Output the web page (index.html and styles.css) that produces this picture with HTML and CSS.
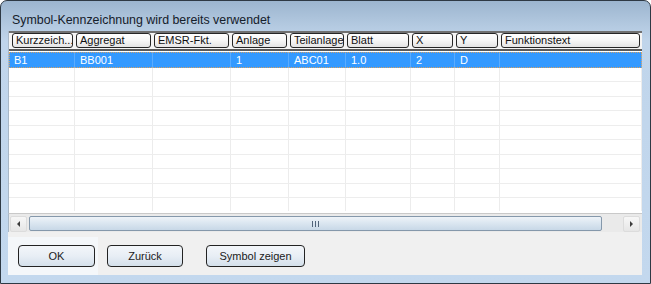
FILE: index.html
```html
<!DOCTYPE html>
<html lang="de">
<head>
  <meta charset="UTF-8">
  <title>Symbol-Kennzeichnung wird bereits verwendet</title>
  <link rel="stylesheet" href="styles.css">
</head>
<body>
  <div class="window">
    <div class="titlebar">Symbol-Kennzeichnung wird bereits verwendet</div>
    <div class="frame">
      <div class="grid">
        <div class="grid-head">
          <div class="hcell first"><span>Kurzzeich...</span></div>
          <div class="hcell"><span>Aggregat</span></div>
          <div class="hcell"><span>EMSR-Fkt.</span></div>
          <div class="hcell"><span>Anlage</span></div>
          <div class="hcell"><span>Teilanlage</span></div>
          <div class="hcell"><span>Blatt</span></div>
          <div class="hcell"><span>X</span></div>
          <div class="hcell"><span>Y</span></div>
          <div class="hcell"><span>Funktionstext</span></div>
        </div>
        <div class="grid-body" id="gridBody">
          <div class="row selected">
            <div class="cell">B1</div>
            <div class="cell">BB001</div>
            <div class="cell"></div>
            <div class="cell">1</div>
            <div class="cell">ABC01</div>
            <div class="cell">1.0</div>
            <div class="cell">2</div>
            <div class="cell">D</div>
            <div class="cell"></div>
          </div>
        </div>
      </div>
      <div class="hscroll">
        <div class="arrow left"><i></i></div>
        <div class="track">
          <div class="thumb"><span class="grip"></span></div>
        </div>
        <div class="arrow right"><i></i></div>
      </div>
      <div class="buttons">
        <button class="btn">OK</button>
        <button class="btn">Zurück</button>
        <button class="btn wide">Symbol zeigen</button>
      </div>
    </div>
  </div>

  <script>
    // leere Zeilen unter dem Treffer auffuellen
    const gridBody = document.getElementById("gridBody");
    for (let i = 0; i < 10; i++) {
      const row = document.createElement("div");
      row.className = "row";
      for (let c = 0; c < 9; c++) {
        const cell = document.createElement("div");
        cell.className = "cell";
        row.appendChild(cell);
      }
      gridBody.appendChild(row);
    }
  </script>
</body>
</html>
```

FILE: styles.css
```css
* {
  box-sizing: border-box;
}

body {
  margin: 0;
  font-family: "Liberation Sans", Arial, sans-serif;
  font-size: 11px;
  color: #000;
  background-color: #fff;
}

.window {
  width: 651px;
  height: 284px;
  border: 1px solid #2e3944;
  border-radius: 7px 7px 0 0;
  background: linear-gradient(to bottom, #9cb5cf 0, #b3c9e0 24px, #c0d5eb 40px, #c3d8ee 100%);
  display: flex;
  flex-direction: column;
}

.titlebar {
  height: 30px;
  padding: 0 0 4px 11px;
  display: flex;
  align-items: flex-end;
  font-size: 12.4px;
  color: #15202b;
}

.frame {
  padding: 0 8px 8px 7px;
  display: flex;
  flex-direction: column;
}

.grid {
  height: 182px;
  background-color: #fff;
  border-left: 1px solid #a9b8c7;
  display: flex;
  flex-direction: column;
}

.grid-head,
.row {
  display: grid;
  grid-template-columns: 66px 78px 78px 58px 57px 65px 44px 45px 1fr;
}

.grid-head {
  height: 20px;
  border-top: 2px solid #707070;
  border-bottom: 2px solid #5a5a5a;
  background-color: #f4f4f4;
}

.hcell {
  padding: 0 2px 0 1px;
}

.hcell.first {
  padding-left: 3px;
}

.hcell span {
  display: block;
  height: 15px;
  line-height: 13px;
  padding-left: 3px;
  border: 1px solid #262626;
  border-radius: 3px;
  background: linear-gradient(to bottom, #ffffff 0, #f6f6f6 50%, #e4e4e4 100%);
  color: #111;
  white-space: nowrap;
  overflow: hidden;
}

.grid-body {
  height: 160px;
  padding-top: 1px;
  overflow: hidden;
}

.row {
  height: 14.5px;
  border-bottom: 1px solid #ededed;
}

.cell {
  padding-left: 5px;
  line-height: 13px;
  border-right: 1px solid #ececec;
  white-space: nowrap;
}

.row.selected {
  height: 15.5px;
  background-color: #3399ff;
  color: #fff;
  border-bottom: none;
  outline: 1px dotted #d4a064;
  outline-offset: -1px;
}

.row.selected .cell {
  border-right-color: #5aacff;
  line-height: 16px;
}

.hscroll {
  height: 19px;
  padding: 2px 2px 1px 1px;
  background-color: #eaeaea;
  border-top: 1px solid #c9c9c9;
  border-left: 1px solid #a9b8c7;
  display: flex;
  gap: 2px;
}

.arrow {
  width: 17px;
  height: 16px;
  border: 1px solid #dcdcdc;
  border-radius: 2px;
  background: linear-gradient(to bottom, #f7f7f7, #e6e6e6);
  display: flex;
  align-items: center;
  justify-content: center;
}

.arrow i {
  width: 0;
  height: 0;
  border-top: 3px solid transparent;
  border-bottom: 3px solid transparent;
}

.arrow.left i {
  border-right: 3px solid #3c3c3c;
}

.arrow.right i {
  border-left: 3px solid #3c3c3c;
}

.track {
  flex: 1;
  padding-right: 19px;
  display: flex;
}

.thumb {
  flex: 1;
  border: 1px solid #8598ab;
  border-radius: 2px;
  background: linear-gradient(to bottom, #eef3f8 0, #dce7f1 45%, #c8d8e7 100%);
  display: flex;
  align-items: center;
  justify-content: center;
}

.grip {
  width: 7px;
  height: 6px;
  background: repeating-linear-gradient(to right, #51647a 0, #51647a 1px, transparent 1px, transparent 3px);
}

.buttons {
  height: 43px;
  padding: 13px 0 0 10px;
  background: linear-gradient(#f4f7fa, #f4f7fa) 0 5px / 90px 38px no-repeat, #f0f0f0;
  display: flex;
  align-items: flex-start;
  gap: 12px;
}

.btn {
  height: 22px;
  width: 77px;
  padding: 0;
  border: 1px solid #232323;
  border-radius: 4px;
  background: linear-gradient(to bottom, #f3f6fa 0, #e8eef5 50%, #d4e0eb 100%);
  font-family: "Liberation Sans", Arial, sans-serif;
  font-size: 11px;
  color: #1b1b1b;
}

.btn + .btn {
  width: 76px;
}

.btn.wide {
  width: 99px;
  margin-left: 11px;
}
```
